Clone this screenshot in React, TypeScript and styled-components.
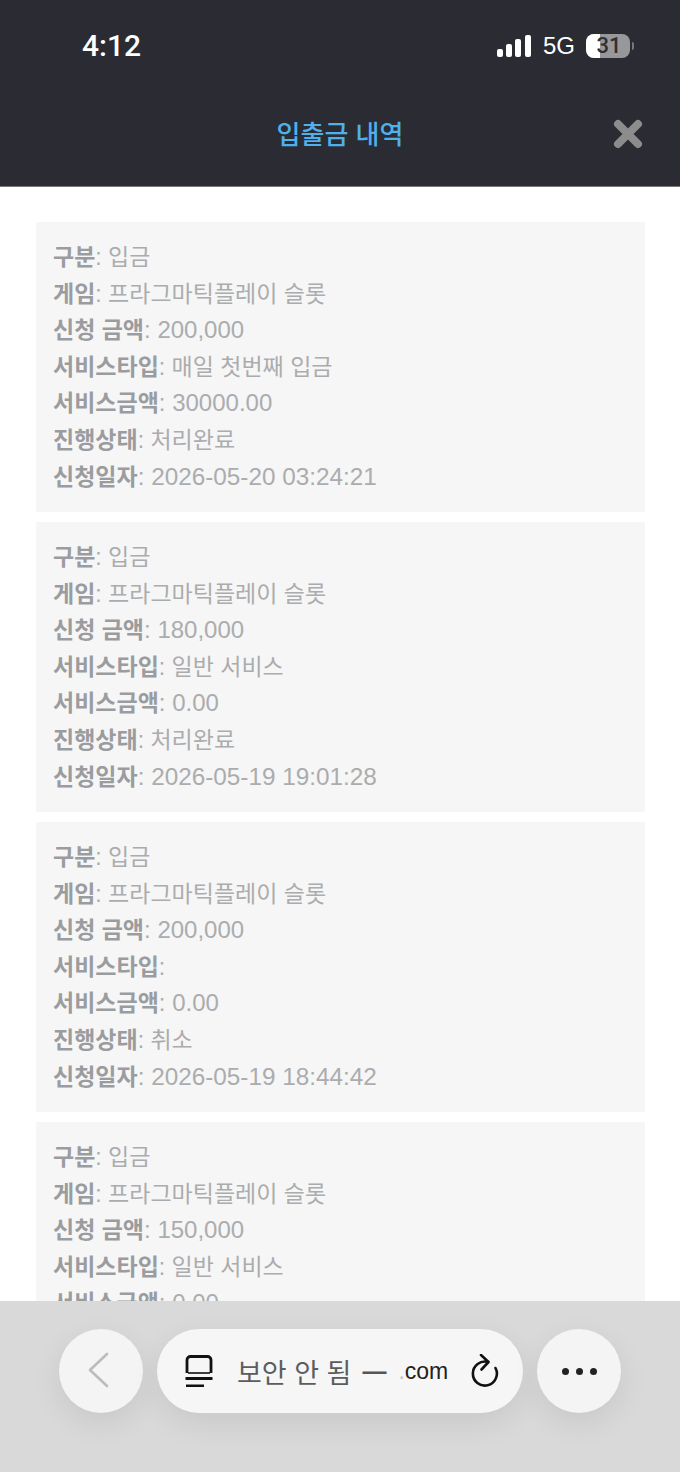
import styled, { createGlobalStyle } from "styled-components"

const GlobalStyle = createGlobalStyle`
    html, body {
        margin: 0;
        padding: 0;
        background: #fff;
    }
`

type Row = { label: string, value: string, numeric?: boolean, wide?: boolean }

const makeRows = (amount: string, type: string, bonus: string): Row[] => [
    { label: "구분", value: "입금" },
    { label: "게임", value: "프라그마틱플레이 슬롯" },
    { label: "신청 금액", value: amount, numeric: true },
    { label: "서비스타입", value: type },
    { label: "서비스금액", value: bonus, numeric: true },
]

const records: Row[][] = [
    [
        ...makeRows("200,000", "매일 첫번째 입금", "30000.00"),
        { label: "진행상태", value: "처리완료" },
        { label: "신청일자", value: "2026-05-20 03:24:21", numeric: true, wide: true },
    ],
    [
        ...makeRows("180,000", "일반 서비스", "0.00"),
        { label: "진행상태", value: "처리완료" },
        { label: "신청일자", value: "2026-05-19 19:01:28", numeric: true, wide: true },
    ],
    [
        ...makeRows("200,000", "", "0.00"),
        { label: "진행상태", value: "취소" },
        { label: "신청일자", value: "2026-05-19 18:44:42", numeric: true, wide: true },
    ],
    // the last card runs under the browser bar
    makeRows("150,000", "일반 서비스", "0.00"),
]

const App = () => {
    return (
        <Page>
            <GlobalStyle />
            <Header>
                <StatusBar>
                    <Clock>4:12</Clock>
                    <StatusIcons>
                        <svg width="36" height="22" viewBox="0 0 36 22">
                            <rect x="1" y="14" width="6" height="8" rx="2" fill="#fff" />
                            <rect x="10" y="9" width="6" height="13" rx="2" fill="#fff" />
                            <rect x="19" y="4" width="6" height="18" rx="2" fill="#fff" />
                            <rect x="29" y="0" width="6" height="22" rx="2" fill="#fff" />
                        </svg>
                        <Network>5G</Network>
                        <BatteryWrap>
                            <Battery>
                                <BatteryFill />
                                <BatteryText>31</BatteryText>
                            </Battery>
                            <BatteryCap />
                        </BatteryWrap>
                    </StatusIcons>
                </StatusBar>
                <TitleRow>
                    <Title>입출금 내역</Title>
                    <CloseIcon viewBox="0 0 30 30" width="30" height="30">
                        <path d="M5 5 L25 25 M25 5 L5 25" stroke="#8c8c8c" strokeWidth="8" strokeLinecap="round" />
                    </CloseIcon>
                </TitleRow>
            </Header>
            <List>
                {records.map((rows, i) => (
                    <Card key={i}>
                        {rows.map(row => (
                            <Line key={row.label}>
                                <Label>{row.label}</Label>
                                <Value $numeric={row.numeric} $wide={row.wide}>: {row.value}</Value>
                            </Line>
                        ))}
                    </Card>
                ))}
            </List>
            <BottomBar>
                <RoundButton>
                    <BackIcon width="24" height="36" viewBox="0 0 24 36" fill="none">
                        <path d="M18 2 L1 18 L18 34" stroke="#bcbcbc" strokeWidth="2.6" strokeLinecap="round" strokeLinejoin="round" />
                    </BackIcon>
                </RoundButton>
                <AddressPill>
                    <svg width="28" height="32" viewBox="0 0 28 32" fill="none">
                        <path d="M2 18 V5 A3.5 3.5 0 0 1 5.500 1.500 H22.500 A3.500 3.500 0 0 1 26 5 V18" stroke="#111" strokeWidth="2.8" />
                        <path d="M3 18 H25" stroke="#111" strokeWidth="1.6" />
                        <path d="M0.500 23.500 H27.500 M1 31 H19" stroke="#111" strokeWidth="2.8" />
                    </svg>
                    <AddressText>보안 안 됨</AddressText>
                    <Dash>—</Dash>
                    <Domain><FaintDot>.</FaintDot>com</Domain>
                    <svg width="28" height="34" viewBox="0 0 28 34" fill="none">
                        <path d="M17 8 A12 12 0 1 0 24.500 14" stroke="#111" strokeWidth="2.6" strokeLinecap="round" />
                        <path d="M10 1 L17.500 8 L10.500 15.500" stroke="#111" strokeWidth="2.6" strokeLinecap="round" strokeLinejoin="round" />
                    </svg>
                </AddressPill>
                <RoundButton>
                    <Dots>
                        <Dot />
                        <Dot />
                        <Dot />
                    </Dots>
                </RoundButton>
            </BottomBar>
        </Page>
    )
}

export default App

const Page = styled.div`
    position: relative;
    width: 680px;
    height: 1472px;
    overflow: hidden;
    background: #fff;
    font-family: "Liberation Sans", "Noto Sans CJK KR", sans-serif;
`

const Header = styled.header`
    height: 186px;
    background: #2a2b33;
    border-bottom: 1px solid #77787d;
`

const StatusBar = styled.div`
    height: 91px;
    padding: 0 46px 0 82px;
    display: flex;
    align-items: center;
    justify-content: space-between;
`

const Clock = styled.span`
    font-family: "Roboto", "Liberation Sans", sans-serif;
    font-size: 30px;
    font-weight: 500;
    color: #fff;
`

const StatusIcons = styled.div`
    display: flex;
    align-items: center;
    gap: 11px;
`

const Network = styled.span`
    font-size: 24px;
    color: #fff;
`

const BatteryWrap = styled.div`
    display: flex;
    align-items: center;
    gap: 2px;
`

const Battery = styled.div`
    position: relative;
    width: 44px;
    height: 24px;
    border-radius: 8px;
    background: #98989b;
    overflow: hidden;
    display: flex;
    align-items: center;
    justify-content: center;
`

const BatteryFill = styled.div`
    position: absolute;
    left: 0;
    top: 0;
    bottom: 0;
    width: 14px;
    background: #fff;
`

const BatteryText = styled.span`
    position: relative;
    left: 1px;
    font-family: "Roboto", sans-serif;
    font-size: 22px;
    font-weight: 500;
    color: #2f3036;
`

const BatteryCap = styled.div`
    width: 2px;
    height: 8px;
    border-radius: 0 2px 2px 0;
    background: #77787d;
`

const TitleRow = styled.div`
    position: relative;
    height: 86px;
    display: flex;
    align-items: center;
    justify-content: center;
`

const Title = styled.h1`
    margin: 0 0 4px;
    font-size: 26px;
    font-weight: 500;
    color: #4fb0ea;
`

const CloseIcon = styled.svg`
    position: absolute;
    right: 37px;
    top: 28px;
`

const List = styled.div`
    padding: 35px 35px 0 36px;
    display: flex;
    flex-direction: column;
    gap: 10px;
`

const Card = styled.section`
    height: 290px;
    padding: 17px 17px 0;
    background: #f6f6f6;
    box-sizing: border-box;
`

const Line = styled.div`
    height: 36.6px;
    line-height: 36.6px;
    font-size: 23px;
    white-space: nowrap;
`

const Label = styled.span`
    font-weight: 700;
    color: #9a9c9f;
`

const Value = styled.span<{ $numeric?: boolean, $wide?: boolean }>`
    font-size: ${props => props.$wide ? "24.3px" : props.$numeric ? "24px" : "23px"};
    color: #abacae;
`

const BottomBar = styled.div`
    position: absolute;
    left: 0;
    right: 0;
    bottom: 0;
    height: 171px;
    padding: 28px 59px 0;
    box-sizing: border-box;
    background: #d9d9d9;
    display: flex;
    align-items: flex-start;
    gap: 14px;
`

const RoundButton = styled.div`
    width: 84px;
    height: 84px;
    flex: none;
    border-radius: 50%;
    background: #f4f4f4;
    box-shadow: 0 10px 30px rgba(0, 0, 0, 0.08);
    display: flex;
    align-items: center;
    justify-content: center;
`

const BackIcon = styled.svg`
    margin-top: -2px;
    overflow: visible;
`

const AddressPill = styled.div`
    width: 366px;
    height: 84px;
    flex: none;
    padding: 0 24px 0 28px;
    box-sizing: border-box;
    border-radius: 42px;
    background: #f6f6f6;
    box-shadow: 0 10px 30px rgba(0, 0, 0, 0.08);
    display: flex;
    align-items: center;
`

const AddressText = styled.span`
    margin-left: 24px;
    font-size: 27px;
    color: #5c5c5c;
    white-space: nowrap;
`

const Dash = styled.span`
    margin-left: 11px;
    font-size: 24px;
    font-weight: 700;
    color: #555;
`

const Domain = styled.span`
    margin-left: 12px;
    margin-right: auto;
    font-size: 23px;
    color: #222;
`

const FaintDot = styled.span`
    color: #c4c4c4;
`

const Dots = styled.div`
    display: flex;
    gap: 7px;
`

const Dot = styled.span`
    width: 7px;
    height: 7px;
    border-radius: 50%;
    background: #222;
`
